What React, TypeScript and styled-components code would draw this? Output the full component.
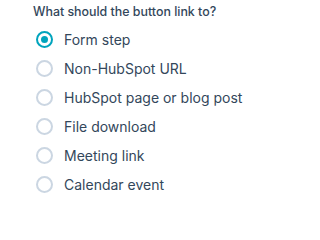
import React, { useState } from "react";
import styled, { createGlobalStyle } from "styled-components";

const GlobalStyle = createGlobalStyle`
  body {
    margin: 0;
    background: #ffffff;
    font-family: Inter, "Open Sans", sans-serif;
  }
`;

const Panel = styled("div")`
  padding: 4px 0 0 33px;
  width: 311px;
  height: 217px;
  box-sizing: border-box;
`;

const Title = styled("div")`
  font-size: 12.4px;
  font-weight: 500;
  color: #33475b;
  line-height: 16px;
`;

const Options = styled("div")`
  display: flex;
  flex-direction: column;
  gap: 7px;
  margin-top: 8px;
`;

const Option = styled("label")`
  display: flex;
  align-items: center;
  gap: 11px;
  height: 22px;
  margin-left: 3px;
  cursor: pointer;
  font-size: 14px;
  color: #33475b;
`;

const Dot = styled("span")<{ $checked: boolean }>`
  width: 13px;
  height: 13px;
  border-radius: 50%;
  border: 2px solid ${({ $checked }) => ($checked ? "#00a4bd" : "#cbd6e2")};
  background: #ffffff;
  display: flex;
  align-items: center;
  justify-content: center;
  flex-shrink: 0;

  &::after {
    content: "";
    width: 7px;
    height: 7px;
    border-radius: 50%;
    background: ${({ $checked }) => ($checked ? "#00a4bd" : "transparent")};
  }
`;

const options = [
  "Form step",
  "Non-HubSpot URL",
  "HubSpot page or blog post",
  "File download",
  "Meeting link",
  "Calendar event",
];

const App = () => {
  const [selected, setSelected] = useState(0);

  return (
    <>
      <GlobalStyle />
      <Panel role="radiogroup">
        <Title>What should the button link to?</Title>
        <Options>
          {options.map((text, i) => (
            <Option key={text} onClick={() => setSelected(i)}>
              <Dot $checked={selected === i} />
              {text}
            </Option>
          ))}
        </Options>
      </Panel>
    </>
  );
};

export default App;
